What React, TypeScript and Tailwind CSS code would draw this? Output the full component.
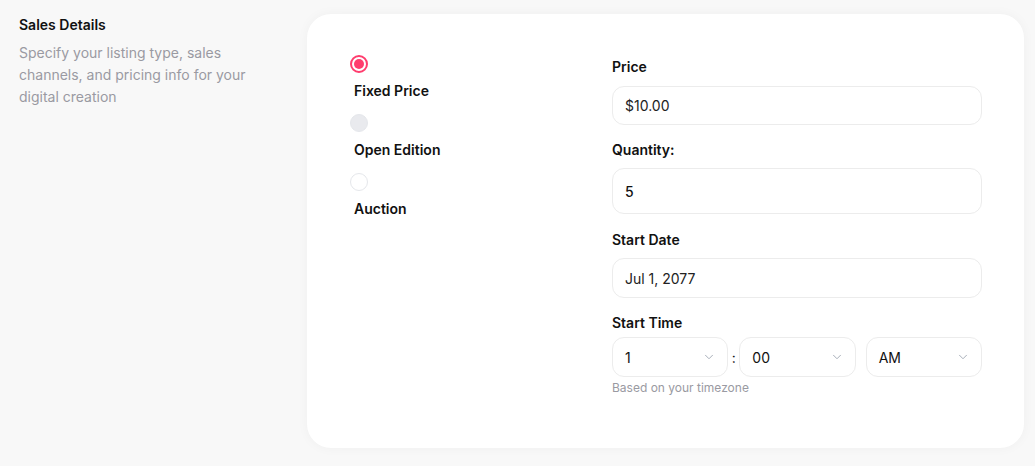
import { ChevronDown } from "lucide-react";

type Option = { label: string; state: "checked" | "filled" | "empty" };

const options: Option[] = [
  { label: "Fixed Price", state: "checked" },
  { label: "Open Edition", state: "filled" },
  { label: "Auction", state: "empty" },
];

function Radio({ state }: { state: Option["state"] }) {
  if (state === "checked") {
    return (
      <span className="flex h-[18px] w-[18px] items-center justify-center rounded-full border-2 border-[#ff3d6e] bg-white">
        <span className="h-[10px] w-[10px] rounded-full bg-[#ff3d6e]" />
      </span>
    );
  }
  return (
    <span
      className={`h-[18px] w-[18px] rounded-full border border-[#e5e7eb] ${
        state === "filled" ? "bg-[#e9eaee]" : "bg-white"
      }`}
    />
  );
}

function TimeSelect({ value }: { value: string }) {
  return (
    <div className="flex h-[40px] min-w-0 flex-1 items-center justify-between rounded-xl border border-[#ececec] bg-white pl-3 pr-[11px]">
      <span className="text-[14px] text-[#111]">{value}</span>
      <ChevronDown size={14} strokeWidth={1.5} className="text-[#9ca3af]" />
    </div>
  );
}

export default function App() {
  return (
    <div
      className="flex min-h-[466px] bg-[#f8f8f8] pl-[19px] pr-[11px] pt-[14px] pb-[18px]"
      style={{ fontFamily: "Inter, 'Noto Sans', sans-serif" }}
    >
      {/* Left info */}
      <div className="w-[288px] shrink-0 pt-[1px]">
        <h2 className="text-[14px] font-semibold leading-[20px] text-[#111]">
          Sales Details
        </h2>
        <p className="mt-[7px] w-[240px] text-[14px] leading-[22px] text-[#9a9aa2]">
          Specify your listing type, sales channels, and pricing info for your
          digital creation
        </p>
      </div>

      {/* Card */}
      <div className="flex min-w-0 flex-1 rounded-3xl bg-white pl-[43px] pr-[42px] pt-[41px] pb-[49px] shadow-[0_0_12px_rgba(0,0,0,0.04)]">
        {/* Listing type */}
        <div className="flex w-[262px] shrink-0 flex-col gap-[16px]">
          {options.map((o) => (
            <label key={o.label} className="flex flex-col">
              <Radio state={o.state} />
              <span className="mt-[11px] pl-[4px] text-[14px] font-semibold leading-[14px] text-[#111]">
                {o.label}
              </span>
            </label>
          ))}
        </div>

        {/* Fields */}
        <div className="flex min-w-0 flex-1 flex-col">
          <label className="mt-[4px] text-[14px] font-semibold leading-[16px] text-[#111]">
            Price
          </label>
          <div className="mt-[11px] flex h-[39px] items-center rounded-xl border border-[#ececec] px-3 text-[14px] text-[#222]">
            $10.00
          </div>

          <label className="mt-[17px] text-[14px] font-semibold leading-[16px] text-[#111]">
            Quantity:
          </label>
          <div className="mt-[10px] flex h-[46px] items-center rounded-xl border border-[#ececec] px-3 text-[14px] font-medium text-[#111]">
            5
          </div>

          <label className="mt-[18px] text-[14px] font-semibold leading-[16px] text-[#111]">
            Start Date
          </label>
          <div className="mt-[10px] flex h-[40px] items-center rounded-xl border border-[#ececec] px-3 text-[14px] text-[#222]">
            Jul 1, 2077
          </div>

          <label className="mt-[17px] text-[14px] font-semibold leading-[16px] text-[#111]">
            Start Time
          </label>
          <div className="mt-[6px] flex items-center">
            <TimeSelect value="1" />
            <span className="w-[11px] text-center text-[14px] text-[#111]">:</span>
            <TimeSelect value="00" />
            <span className="w-[10px]" />
            <TimeSelect value="AM" />
          </div>
          <p className="mt-[3px] text-[12px] leading-[16px] text-[#9a9aa2]">
            Based on your timezone
          </p>
        </div>
      </div>
    </div>
  );
}
